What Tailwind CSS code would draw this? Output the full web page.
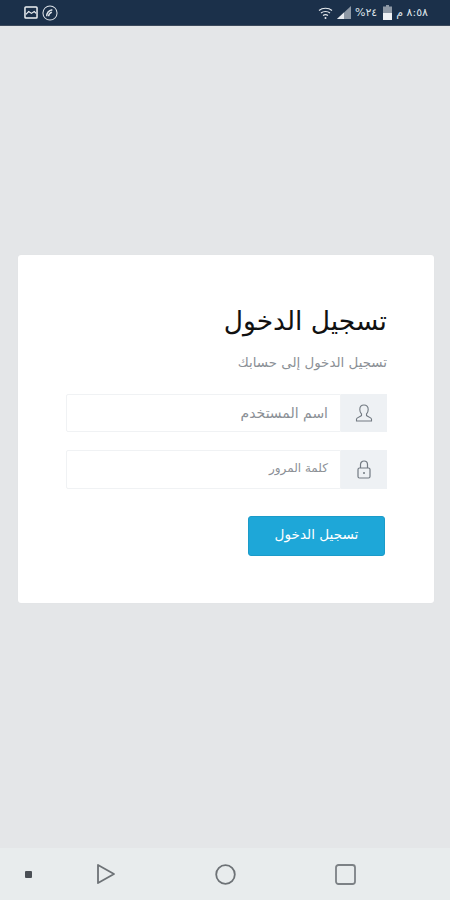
<!DOCTYPE html>
<html lang="ar" dir="rtl">

<head>
  <meta charset="UTF-8" />
  <meta name="viewport" content="width=device-width, initial-scale=1.0" />
  <title>تسجيل الدخول</title>
  <script src="https://cdn.jsdelivr.net/npm/@tailwindcss/browser@4"></script>
</head>

<body class="h-[900px] w-[450px] overflow-hidden flex flex-col bg-[#e4e6e8] font-['DejaVu_Sans',sans-serif]">

  <!-- status bar -->
  <div dir="ltr" class="h-[26px] shrink-0 bg-[#1b304a] flex items-center justify-between pl-6 pr-[22px] border-b border-[#3c4a5c]">
    <div class="flex items-center gap-[4px]">
      <svg width="14" height="13" viewBox="0 0 15 14" fill="none" stroke="#eef1f4" stroke-width="1.6">
        <rect x="1" y="1" width="13" height="12" rx="1" />
        <path d="M2 9l3-3 3 2 3-2 2 2" stroke-width="1.2" />
      </svg>
      <svg width="16" height="16" viewBox="0 0 17 17" fill="none" stroke="#dfe4ea" stroke-width="1.1">
        <circle cx="8.5" cy="8.5" r="7.5" />
        <path d="M5 12c0-3 2-6 6-7M7 12c0-2 1-3.500 3.500-4.500" stroke-width="1.500" />
      </svg>
    </div>
    <div class="flex items-center gap-[4px] text-[#dfe4ea] text-[11px] leading-none">
      <svg width="15" height="14" viewBox="0 0 15 14" fill="none" stroke="#e6eaee" stroke-width="1.1">
        <path d="M1 4.500c3.500-3 9.500-3 13 0M3 7c2.500-2 6.500-2 9 0M5 9.500c1.500-1 3.500-1 5 0" />
        <circle cx="7.500" cy="12" r="1" fill="#e6eaee" stroke="none" />
      </svg>
      <svg width="14" height="13" viewBox="0 0 14 13">
        <path d="M0 13L14 0v13z" fill="#8d98a5" />
        <path d="M0 13l7-6.500V13z" fill="#e6eaee" />
      </svg>
      <span>%٢٤</span>
      <svg class="ml-[2px]" width="9" height="15" viewBox="0 0 9 15">
        <path d="M3 0h3v1.500h3V15H0V1.500h3z" fill="#8d98a5" />
        <rect y="8" width="9" height="7" fill="#eef1f4" />
      </svg>
      <span>٨:٥٨ م</span>
    </div>
  </div>

  <!-- page -->
  <main class="flex-1 px-[16px] pt-[229px]">
    <div class="h-[348px] w-[416px] rounded-[3px] bg-white pt-[46px] pr-[47px] pl-[47px] shadow-[0_0_1px_rgba(0,0,0,0.05)]">
      <h1 class="text-[26.5px] leading-[40px] text-[#111111] font-normal">تسجيل الدخول</h1>
      <p class="mt-[12px] text-[13.4px] leading-[20px] text-[#8b9096]">تسجيل الدخول إلى حسابك</p>

      <div class="mt-[21px] flex h-[38px] w-[321px]">
        <div class="w-[46px] shrink-0 bg-[#eef1f4] flex items-center justify-center">
          <svg width="18" height="18" viewBox="0 0 18 18" fill="none" stroke="#727a82" stroke-width="1.100">
            <path d="M1.500 17h15v-2c0-1.500-4-2.500-5-3.500v-1.500c1-1 1.700-2.500 1.700-4.500C13.200 2.500 11.500 1 9 1S4.800 2.500 4.800 5.500c0 2 .7 3.500 1.700 4.500v1.500c-1 1-5 2-5 3.500z" />
          </svg>
        </div>
        <div class="flex-1 border border-[#f0f2f4] rounded-l-[2px] flex items-center pr-[12px] text-[14px] text-[#8b9096]">اسم المستخدم</div>
      </div>

      <div class="mt-[18px] flex h-[39px] w-[321px]">
        <div class="w-[46px] shrink-0 bg-[#eef1f4] flex items-center justify-center">
          <svg width="14" height="19" viewBox="0 0 14 19" fill="none" stroke="#727a82" stroke-width="1.200">
            <rect x="1" y="8" width="12" height="10" rx="1.500" />
            <path d="M3.500 8V4.500a3.500 3.500 0 0 1 7 0V8" />
            <circle cx="7" cy="13" r="1" fill="#727a82" stroke="none" />
          </svg>
        </div>
        <div class="flex-1 border border-[#f0f2f4] rounded-l-[2px] flex items-center pr-[12px] pb-[3px] text-[12px] text-[#8b9096]">كلمة المرور</div>
      </div>

      <button class="mt-[27px] block mr-[2px] h-[40px] w-[137px] pb-[3px] rounded-[3px] border border-[#1b9bc9] bg-[#1ea7d8] text-white text-[13.6px]">تسجيل الدخول</button>
    </div>
  </main>

  <!-- nav bar -->
  <div dir="ltr" class="relative h-[52px] shrink-0 bg-[#e8eced] flex items-center">
    <div class="ml-[25px] w-[7px] h-[7px] rounded-[1px] bg-[#4a4f55]"></div>
    <svg class="ml-[64px]" width="20" height="22" viewBox="0 0 20 22" fill="none" stroke="#6d7276" stroke-width="1.800" stroke-linejoin="round">
      <path d="M2 2l16 9-16 9z" />
    </svg>
    <svg class="ml-[99px]" width="21" height="21" viewBox="0 0 21 21" fill="none" stroke="#6d7276" stroke-width="1.800">
      <circle cx="10.500" cy="10.500" r="9.300" />
    </svg>
    <svg class="ml-[99px]" width="21" height="21" viewBox="0 0 21 21" fill="none" stroke="#7c8185" stroke-width="1.800">
      <rect x="1" y="1" width="19" height="19" rx="2.500" />
    </svg>
  </div>

</body>

</html>
